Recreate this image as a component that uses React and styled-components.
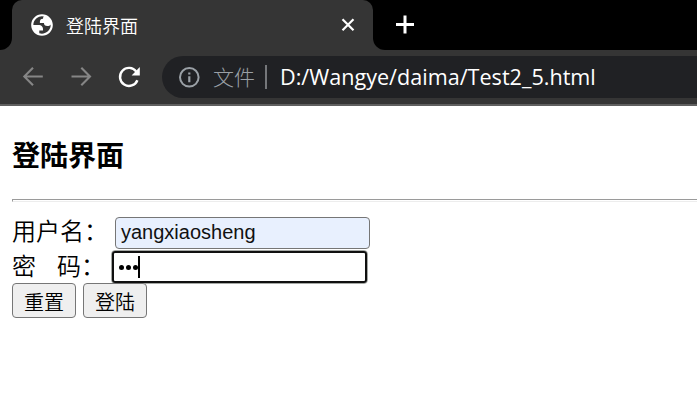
import React from "react";
import styled, { createGlobalStyle } from "styled-components";

const Global = createGlobalStyle`
  * { box-sizing: border-box; }
  html, body { margin: 0; height: 100%; overflow: hidden; background: #fff; }
  body { font-family: "Noto Sans CJK SC", sans-serif; }
  svg { display: block; flex: none; }
`;

const Window = styled.div`
  width: 697px;
  height: 411px;
  overflow: hidden;
`;

const TabStrip = styled.div`
  display: flex;
  height: 50px;
  background: linear-gradient(#000 25px, #353535 25px);
`;

const StripStart = styled.div`
  width: 12px;
  background: #000;
  border-bottom-right-radius: 12px;
`;

const StripEnd = styled.div`
  flex: 1;
  display: flex;
  align-items: flex-start;
  padding: 14px 0 0 22px;
  background: #000;
  border-bottom-left-radius: 12px;
`;

const Tab = styled.div`
  display: flex;
  align-items: center;
  width: 361px;
  padding: 0 18px 0 17px;
  background: #353535;
  border-radius: 10px 10px 0 0;
`;

const TabTitle = styled.span`
  flex: 1;
  margin: -1px 0 0 11px;
  color: #fff;
  font-size: 18px;
  font-weight: 350;
  line-height: 26px;
`;

const Toolbar = styled.div`
  display: flex;
  align-items: center;
  height: 56px;
  padding: 4px 0 4px 20px;
  background: #353535;
  border-bottom: 2px solid #5f5f5f;
`;

const NavIcons = styled.div`
  display: flex;
  gap: 22px;
  width: 142px;
`;

const AddressBar = styled.div`
  display: flex;
  align-items: center;
  flex: 1;
  height: 42px;
  padding-left: 14px;
  background: #202124;
  border-radius: 21px 0 0 21px;
`;

const Scheme = styled.span`
  margin: -2px 0 0 11px;
  color: #9aa0a6;
  font-weight: 300;
  font-size: 21px;
  line-height: 30px;
`;

const Separator = styled.span`
  width: 2px;
  height: 24px;
  margin: 0 13px 0 10px;
  background: #75777a;
`;

const Url = styled.span`
  color: #fff;
  font-family: "Open Sans", sans-serif;
  font-size: 21.6px;
  line-height: 30px;
  white-space: nowrap;
`;

const Page = styled.main`
  padding: 28px 0 0 12px;
`;

const Heading = styled.h3`
  margin: 0;
  height: 40px;
  font-size: 28px;
  font-weight: 700;
  line-height: 40px;
`;

const Rule = styled.hr`
  height: 3px;
  margin: 25px 0 15px;
  border: 1px solid #ededed;
  border-top-color: #9a9a9a;
  border-left-color: #9a9a9a;
  border-right: 0;
`;

const Row = styled.div`
  display: flex;
  align-items: flex-start;
  height: 33px;
`;

const Label = styled.label`
  display: flex;
  width: ${(p) => p.$width}px;
  margin-top: ${(p) => p.$shift}px;
  font-size: 24px;
  font-weight: 350;
  line-height: 32px;
  white-space: pre;
`;

const LabelGap = styled.span`
  width: 21px;
`;

const Field = styled.div`
  display: flex;
  align-items: center;
  width: 255px;
  height: 32px;
  padding: 0 0 2px 5px;
  border: 1px solid #767676;
  border-radius: 4px;
  background: #e8f0fe;
  font: 20px/28px "Liberation Sans", sans-serif;
  color: #111;
`;

const FocusedField = styled(Field)`
  width: 257px;
  height: 34px;
  border: 1px solid #a5a8a5;
  outline: 2px solid #101010;
  outline-offset: -3px;
  background: #fff;
  padding: 0 0 0 7px;
`;

const Dot = styled.span`
  width: 5px;
  height: 5px;
  margin-right: 2px;
  border-radius: 50%;
  background: #000;
`;

const Caret = styled.span`
  width: 1.5px;
  height: 22px;
  margin-left: -2px;
  background: #000;
`;

const Buttons = styled.div`
  display: flex;
  gap: 7px;
`;

const Button = styled.button`
  width: 64px;
  height: 35px;
  padding: 2px 0 0;
  border: 1px solid #767676;
  border-radius: 4px;
  background: #efefef;
  color: #000;
  font: 350 20px/30px "Noto Sans CJK SC", sans-serif;
`;

function GlobeIcon() {
  return (
    <svg width="26" height="26" viewBox="0 0 24 24">
      <path
        fill="#fff"
        fillRule="evenodd"
        d="M12 2C6.48 2 2 6.48 2 12s4.48 10 10 10 10-4.48 10-10S17.52 2 12 2zM4 12h4.4c3.407.022 4.922 1.73 4.543 5.127H9.488v2.47a8.004 8.004 0 0 0 10.498-8.083C19.327 12.504 18.332 13 17 13c-2.137 0-3.206-.916-3.206-2.75h-3.748c-.274-2.728.683-4.092 2.87-4.092 0-.975.327-1.597.811-1.97A8.004 8.004 0 0 0 4 12z"
      />
    </svg>
  );
}

function CloseIcon() {
  return (
    <svg width="14" height="14" viewBox="0 0 14 14">
      <path d="M1.5 1.2 12.5 12.2M12.5 1.2 1.5 12.2" stroke="#fff" strokeWidth="2.2" />
    </svg>
  );
}

function PlusIcon() {
  return (
    <svg width="20" height="20" viewBox="0 0 20 20">
      <path d="M10 1.5V19.5M1 10.5H19" stroke="#fff" strokeWidth="3" />
    </svg>
  );
}

function ArrowIcon({ forward }) {
  return (
    <svg width="26" height="26" viewBox="0 0 26 26">
      <path
        d={forward ? "M3.5 12.5H22M13.3 3.8 22 12.5l-8.7 8.7" : "M22.8 12.5H4.3M13 3.8 4.3 12.5l8.7 8.7"}
        fill="none"
        stroke="#868686"
        strokeWidth="2.1"
      />
    </svg>
  );
}

function ReloadIcon() {
  return (
    <svg width="26" height="26" viewBox="0 0 26 26">
      <path d="M21.4 16.2A9 9 0 1 1 20.3 7.6" fill="none" stroke="#fff" strokeWidth="2.4" />
      <path d="M23.8 3V11.6H15.6Z" fill="#fff" />
    </svg>
  );
}

function InfoIcon() {
  return (
    <svg width="26" height="26" viewBox="0 0 26 26">
      <circle cx="13.3" cy="13.3" r="9.3" fill="none" stroke="#9aa0a6" strokeWidth="2" />
      <path d="M13.3 12.2v6M13.3 8.4v2.1" stroke="#9aa0a6" strokeWidth="2.2" />
    </svg>
  );
}

export default function App() {
  return (
    <Window>
      <Global />
      <TabStrip>
        <StripStart />
        <Tab>
          <GlobeIcon />
          <TabTitle>登陆界面</TabTitle>
          <CloseIcon />
        </Tab>
        <StripEnd>
          <PlusIcon />
        </StripEnd>
      </TabStrip>
      <Toolbar>
        <NavIcons>
          <ArrowIcon />
          <ArrowIcon forward />
          <ReloadIcon />
        </NavIcons>
        <AddressBar>
          <InfoIcon />
          <Scheme>文件</Scheme>
          <Separator />
          <Url>D:/Wangye/daima/Test2_5.html</Url>
        </AddressBar>
      </Toolbar>
      <Page>
        <Heading>登陆界面</Heading>
        <Rule />
        <Row>
          <Label $width={103} $shift={-3}>用户名：</Label>
          <Field>yangxiaosheng</Field>
        </Row>
        <Row>
          <Label $width={99} $shift={-1}>
            密<LabelGap />码：
          </Label>
          <FocusedField>
            <Dot />
            <Dot />
            <Dot />
            <Caret />
          </FocusedField>
        </Row>
        <Buttons>
          <Button>重置</Button>
          <Button>登陆</Button>
        </Buttons>
      </Page>
    </Window>
  );
}
